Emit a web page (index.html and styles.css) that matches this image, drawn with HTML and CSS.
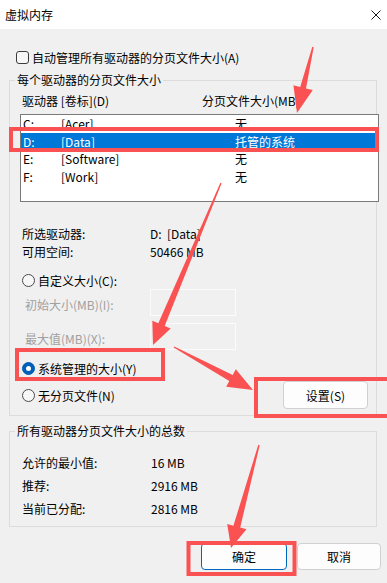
FILE: index.html
```html
<!DOCTYPE html>
<html lang="zh-CN">
<head>
    <meta charset="UTF-8">
    <title>虚拟内存</title>
    <link rel="stylesheet" href="styles.css">
</head>
<body>
<div class="titlebar">
    <span class="title">虚拟内存</span>
    <svg class="close" viewBox="0 0 10 10"><path d="M0.5 0.5L9.5 9.5M9.5 0.5L0.5 9.5" stroke="#1a1a1a" stroke-width="1"/></svg>
</div>
<div class="dialog">
    <label class="check-row"><span class="checkbox"></span>自动管理所有驱动器的分页文件大小(A)</label>

    <fieldset class="group">
        <legend>每个驱动器的分页文件大小</legend>
        <div class="group-body">
            <div class="list-head">
                <span class="col-drive">驱动器 [卷标](D)</span>
                <span>分页文件大小(MB)</span>
            </div>
            <ul class="drive-list">
                <li><span class="c1">C:</span><span class="c2">[Acer]</span><span>无</span></li>
                <li class="sel"><span class="c1">D:</span><span class="c2">[Data]</span><span>托管的系统</span></li>
                <li><span class="c1">E:</span><span class="c2">[Software]</span><span>无</span></li>
                <li><span class="c1">F:</span><span class="c2">[Work]</span><span>无</span></li>
            </ul>

            <div class="info">
                <div class="info-row"><span class="info-label">所选驱动器:</span><span>D:&nbsp; [Data]</span></div>
                <div class="info-row"><span class="info-label">可用空间:</span><span>50466 MB</span></div>
            </div>

            <label class="radio-row first"><span class="radio"></span>自定义大小(C):</label>
            <div class="field-row">
                <span class="field-label">初始大小(MB)(I):</span>
                <span class="field"></span>
            </div>
            <div class="field-row second">
                <span class="field-label">最大值(MB)(X):</span>
                <span class="field"></span>
            </div>
            <label class="radio-row system"><span class="radio on"></span>系统管理的大小(Y)</label>
            <div class="last-row">
                <label class="radio-row"><span class="radio"></span>无分页文件(N)</label>
                <button class="btn btn-set">设置(S)</button>
            </div>
        </div>
    </fieldset>

    <fieldset class="group totals-group">
        <legend>所有驱动器分页文件大小的总数</legend>
        <div class="group-body totals">
            <div class="total-row"><span class="total-label">允许的最小值:</span><span>16 MB</span></div>
            <div class="total-row"><span class="total-label">推荐:</span><span>2916 MB</span></div>
            <div class="total-row"><span class="total-label">当前已分配:</span><span>2816 MB</span></div>
        </div>
    </fieldset>

    <div class="actions">
        <button class="btn btn-ok">确定</button>
        <button class="btn btn-cancel">取消</button>
    </div>
</div>

<!-- annotation marks drawn over the dialog -->
<svg class="marks" viewBox="0 0 387 583">
    <g fill="none" stroke="#fa5252" stroke-width="4">
        <rect x="11" y="129" width="366" height="21"/>
        <rect x="17" y="350" width="146" height="29"/>
        <rect x="256" y="379" width="140" height="37"/>
        <rect x="188.5" y="543" width="106" height="31"/>
    </g>
    <g fill="#fa5252">
        <polygon points="312.3,46.8 300.2,87 293.4,85.3 297,113 312.8,90.1 306,88.4 313.7,47.2"/>
        <polygon points="220.4,182.7 158.3,323.3 152.3,320.8 153,345 170.7,328.6 164.7,326.1 221.6,183.3"/>
        <polygon points="173.7,347.6 229.3,381.1 226.2,386.8 253,390 235.8,369.2 232.7,374.9 174.3,346.4"/>
        <polygon points="258.3,444.8 233.4,525.8 227.2,524.1 231,548 246.5,529.3 240.2,527.6 259.7,445.2"/>
    </g>
</svg>
</body>
</html>
```

FILE: styles.css
```css
html, body {
    margin: 0;
    padding: 0;
}

body {
    position: relative;
    width: 387px;
    height: 583px;
    overflow: hidden;
    background-color: #f0f0f0;
    font-family: "Noto Sans CJK SC", "Noto Sans", sans-serif;
    font-size: 12px;
    color: #000;
}

.titlebar {
    height: 29px;
    background-color: #fff;
    display: flex;
    align-items: center;
    justify-content: space-between;
    padding: 0 6px 0 5px;
}

.close {
    width: 10px;
    height: 10px;
}

.dialog {
    padding: 20px 0 0 9px;
}

.check-row {
    display: flex;
    align-items: center;
    gap: 3px;
    height: 16px;
    padding-left: 7px;
}

.checkbox {
    width: 13px;
    height: 13px;
    box-sizing: border-box;
    border: 1px solid #3c3c3c;
    border-radius: 3px;
    background-color: #f7f7f7;
}

.group {
    width: 368px;
    min-width: 0;
    box-sizing: border-box;
    margin: 7px 0 0 0;
    padding: 0 8px 6px 5px;
    border: 1px solid #dcdcdc;
}

.group legend {
    padding: 0 2px;
    line-height: 16px;
}

.group-body {
    padding-left: 7px;
}

.list-head {
    display: flex;
    line-height: 16px;
    margin-top: 5px;
}

.col-drive {
    width: 180px;
}

.drive-list {
    list-style: none;
    margin: 5px 0 0 -2px;
    padding: 0;
    width: 359px;
    height: 88px;
    box-sizing: border-box;
    border: 1px solid #7a7a7a;
    background-color: #fff;
}

.drive-list li {
    display: flex;
    height: 17.5px;
    line-height: 17.5px;
    padding-left: 2px;
    margin-right: 2px;
}

.drive-list li.sel {
    background-color: #0078d7;
    color: #fff;
}

.c1 {
    width: 38px;
}

.c2 {
    width: 174px;
}

.info {
    margin-top: 23px;
}

.info-row {
    display: flex;
    line-height: 18px;
}

.info-label {
    width: 128px;
}

.radio-row {
    display: flex;
    align-items: center;
    gap: 3px;
    height: 16px;
}

.radio-row.first {
    margin-top: 11px;
}

.radio-row.system {
    margin-top: 10px;
}

.radio {
    width: 13px;
    height: 13px;
    box-sizing: border-box;
    border: 1px solid #4a4a4a;
    border-radius: 50%;
    background-color: #f7f7f7;
    position: relative;
}

.radio.on {
    border-color: #005fb8;
    background-color: #005fb8;
}

.radio.on::after {
    content: "";
    position: absolute;
    left: 3px;
    top: 3px;
    width: 5px;
    height: 5px;
    border-radius: 50%;
    background-color: #fff;
}

.field-row {
    display: flex;
    align-items: center;
    margin-top: 1px;
}

.field-row.second {
    margin-top: 7px;
}

.field-label {
    width: 125px;
    padding: 4px 0 0 3px;
    line-height: 16px;
    color: #a0a0a0;
}

.field {
    width: 86px;
    height: 27px;
    box-sizing: border-box;
    border: 1px solid #fbfbfb;
}

.last-row {
    display: flex;
    align-items: center;
    justify-content: space-between;
    margin-top: 5px;
}

.btn {
    font: inherit;
    color: #000;
    background-color: #fdfdfd;
    border: 1px solid #d0d0d0;
    border-radius: 4px;
    padding: 0;
}

.btn-set {
    width: 85px;
    height: 28px;
}

.totals-group {
    margin-top: 7px;
}

.totals {
    padding-top: 12px;
}

.total-row {
    display: flex;
    line-height: 23px;
}

.total-label {
    width: 129px;
}

.actions {
    display: flex;
    justify-content: flex-end;
    gap: 10px;
    margin-top: 16px;
    padding-right: 6px;
}

.btn-ok {
    width: 86px;
    height: 27px;
    border-color: #0067c0;
}

.btn-cancel {
    width: 84px;
    height: 27px;
}

.marks {
    position: absolute;
    left: 0;
    top: 0;
    width: 387px;
    height: 583px;
    pointer-events: none;
}
```
